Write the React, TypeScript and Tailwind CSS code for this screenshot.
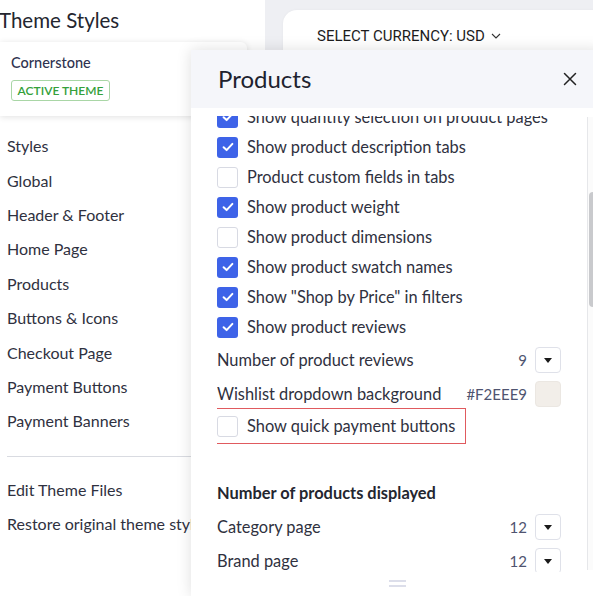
import React from "react";

function Check({ checked }: { checked: boolean }) {
  return checked ? (
    <span className="flex h-[21px] w-[21px] shrink-0 items-center justify-center rounded-[3px] bg-[#3e63e8]">
      <svg width="12" height="10" viewBox="0 0 12 10">
        <path d="M1.6 5.3 L4.6 8.1 L10.4 1.9" stroke="white" strokeWidth="2" fill="none" strokeLinecap="round" strokeLinejoin="round" />
      </svg>
    </span>
  ) : (
    <span className="h-[21px] w-[21px] shrink-0 rounded-[3px] border border-[#d8dae3] bg-white" />
  );
}

function Caret() {
  return (
    <span className="flex h-[26px] w-[26px] items-center justify-center rounded-[4px] border border-[#dfe1e9] bg-white">
      <svg width="8" height="5" viewBox="0 0 8 5">
        <path d="M0 0 L8 0 L4 5 Z" fill="#1a1a1a" />
      </svg>
    </span>
  );
}

function CheckRow({ label, checked }: { label: string; checked: boolean }) {
  return (
    <div className="flex h-[30px] items-center gap-[9px]">
      <Check checked={checked} />
      <span>{label}</span>
    </div>
  );
}

function SelectRow({ label, value, h }: { label: string; value: string; h: string }) {
  return (
    <div className={`flex items-center justify-between ${h}`}>
      <span>{label}</span>
      <div className="flex items-center gap-[8px]">
        <span className="text-[15px] text-[#4f5470]">{value}</span>
        <Caret />
      </div>
    </div>
  );
}

export default function App() {
  const nav = [
    "Styles",
    "Global",
    "Header & Footer",
    "Home Page",
    "Products",
    "Buttons & Icons",
    "Checkout Page",
    "Payment Buttons",
    "Payment Banners",
  ];
  return (
    <div className="relative flex h-[596px] w-[593px] overflow-hidden bg-[#eeeff3] font-['Lato',sans-serif] text-[16px] text-[#2f3140]">
      {/* Left panel */}
      <div className="flex h-full w-[265px] shrink-0 flex-col bg-white">
        <div className="ml-[-1px] flex h-[40px] items-center text-[20.5px] text-[#24262f]">Theme Styles</div>
        <div className="mt-[2px] h-[74px] w-[247px] rounded-r-[6px] bg-white pl-[11px] pt-[12px] shadow-[0_1px_6px_rgba(0,0,0,0.12)]">
          <div className="h-[18px] text-[14.5px] font-medium leading-[18px] text-[#2f3350]">Cornerstone</div>
          <div className="mt-[8px] flex h-[21px] w-[99px] items-center justify-center rounded-[3px] border border-[#a9d6a6] text-[12px] font-semibold text-[#34a03a]">
            ACTIVE THEME
          </div>
        </div>
        <div className="mt-[13px] flex flex-col pl-[7px]">
          {nav.map((n) => (
            <div key={n} className="flex h-[34.4px] items-center">
              {n}
            </div>
          ))}
        </div>
        <div className="ml-[7px] mt-[17px] h-px w-[240px] bg-[#d9dbe1]" />
        <div className="mt-[16px] flex flex-col pl-[7px]">
          <div className="flex h-[34.4px] items-center">Edit Theme Files</div>
          <div className="flex h-[34.4px] items-center whitespace-nowrap">Restore original theme styles</div>
        </div>
      </div>

      {/* Right content */}
      <div className="flex-1 pl-[18px] pt-[10px]">
        <div className="h-[200px] w-[400px] rounded-[14px] bg-white pl-[34px] pt-[16px] shadow-[0_0_3px_rgba(0,0,0,0.04)]">
          <div className="flex h-[20px] items-center gap-[6px] font-['Roboto',sans-serif] text-[15px] text-[#1d1d1d]">
            <span>SELECT CURRENCY: USD</span>
            <svg width="10" height="6" viewBox="0 0 10 6">
              <path d="M1 1 L5 5 L9 1" stroke="#333" strokeWidth="1.1" fill="none" />
            </svg>
          </div>
        </div>
      </div>

      {/* Products panel overlay */}
      <div className="absolute bottom-0 left-[191px] right-[-10px] top-[50px] flex flex-col bg-white shadow-[0_0_14px_rgba(0,0,0,0.13)]">
        <div className="flex h-[58px] shrink-0 items-center justify-between bg-[#f5f6fa] pl-[27px] pr-[26px]">
          <span className="text-[24px] text-[#20222e]">Products</span>
          <svg width="14" height="14" viewBox="0 0 14 14">
            <path d="M1.5 1.5 L12.5 12.5 M12.5 1.5 L1.5 12.5" stroke="#222" strokeWidth="1.5" strokeLinecap="round" />
          </svg>
        </div>
        <div className="flex h-[464px] shrink-0 overflow-hidden">
          <div className="flex-1 pl-[26px] pr-[26px] pt-[8px]">
            <div className="h-full overflow-hidden text-[16.4px]">
              <div className="mt-[-14px]">
                <CheckRow label="Show quantity selection on product pages" checked />
                <CheckRow label="Show product description tabs" checked />
                <CheckRow label="Product custom fields in tabs" checked={false} />
                <CheckRow label="Show product weight" checked />
                <CheckRow label="Show product dimensions" checked={false} />
                <CheckRow label="Show product swatch names" checked />
                <CheckRow label='Show "Shop by Price" in filters' checked />
                <CheckRow label="Show product reviews" checked />
                <SelectRow label="Number of product reviews" value="9" h="h-[36px]" />
                <div className="flex h-[32px] items-center justify-between">
                  <span>Wishlist dropdown background</span>
                  <div className="flex items-center gap-[8px]">
                    <span className="text-[15px] text-[#4f5470]">#F2EEE9</span>
                    <span className="h-[26px] w-[26px] rounded-[4px] border border-[#ebe7e2] bg-[#F2EEE9]" />
                  </div>
                </div>
                <div className="-ml-[9px] mt-[-2px] flex h-[36px] w-[258px] items-center gap-[9px] border border-[#e05a5e] pl-[8px]">
                  <Check checked={false} />
                  <span>Show quick payment buttons</span>
                </div>
                <div className="mt-[32px] flex h-[34px] items-center font-bold text-[#24262f]">
                  Number of products displayed
                </div>
                <SelectRow label="Category page" value="12" h="h-[34px]" />
                <SelectRow label="Brand page" value="12" h="h-[34px]" />
              </div>
            </div>
          </div>
          <div className="mb-[2px] mt-[9px] flex w-[16px] shrink-0 flex-col border-l border-[#e6e7ea] bg-[#fbfbfb]">
            <div className="ml-[1px] mt-[75px] h-[115px] w-[8px] rounded-[4px] bg-[#c9cacd]" />
          </div>
        </div>
        <div className="flex flex-1 flex-col items-center gap-[3px] pt-[8px]">
          <div className="h-[2px] w-[17px] bg-[#dcdeea]" />
          <div className="h-[2px] w-[17px] bg-[#dcdeea]" />
        </div>
      </div>
    </div>
  );
}
